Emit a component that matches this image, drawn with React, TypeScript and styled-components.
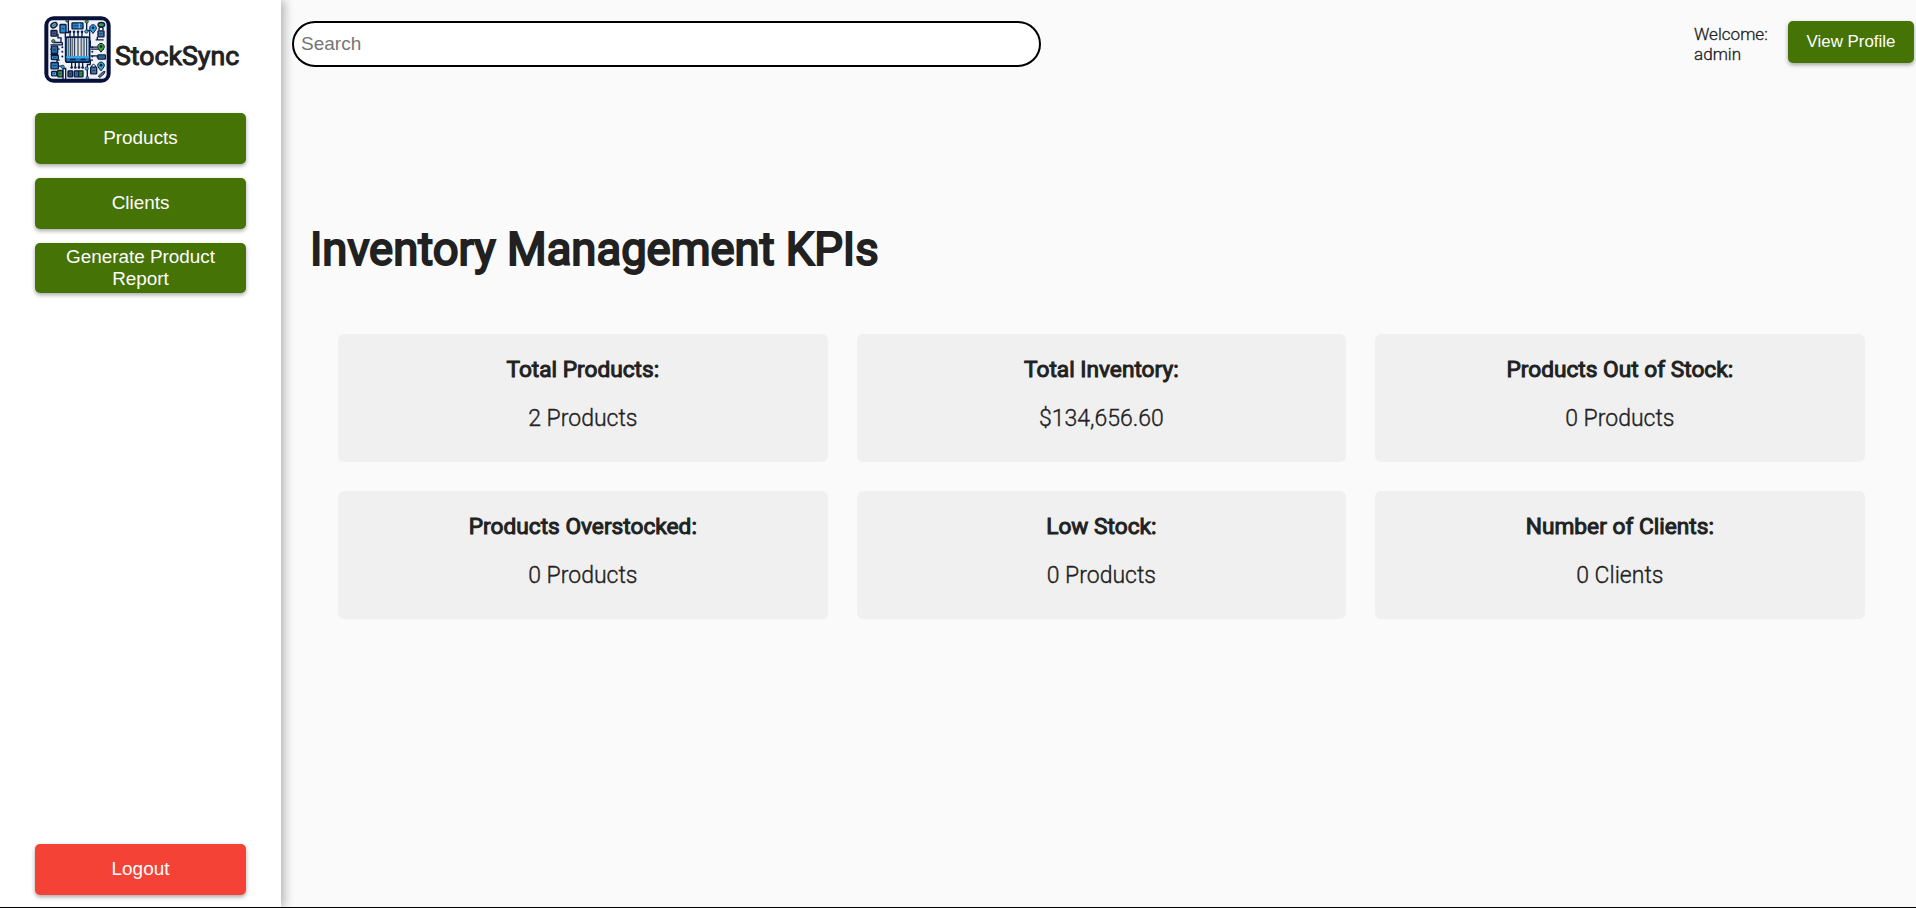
import React from "react";
import styled, { createGlobalStyle } from "styled-components";

const GlobalStyle = createGlobalStyle`
  *, *::before, *::after { box-sizing: border-box; }
  body {
    margin: 0;
    background: #fafafa;
    color: #212121;
    font-family: Roboto, "Liberation Sans", sans-serif;
    font-weight: 300;
  }
`;

const Page = styled.div`
  display: flex;
  height: 908px;
  overflow: hidden;
  border-bottom: 1px solid #000;
`;

const Sidebar = styled.aside`
  display: flex;
  flex-direction: column;
  align-items: center;
  flex: 0 0 281px;
  padding: 16px 0 12px;
  background: #fff;
  box-shadow: 3px 0 10px rgba(0, 0, 0, 0.3);
  z-index: 1;
`;

const Brand = styled.div`
  display: flex;
  align-items: flex-start;
  gap: 4px;
  height: 67px;
  margin: 0 0 30px 2px;
`;

const BrandName = styled.span`
  margin-top: 25px;
  font-size: 26.7px;
  line-height: 30px;
  font-weight: 400;
  -webkit-text-stroke: 1px #212121;
`;

const Button = styled.button`
  border: 0;
  border-radius: 5px;
  background: #457305;
  color: #fff;
  font-family: "Liberation Sans", Arial, sans-serif;
  box-shadow: 0 2px 4px rgba(0, 0, 0, 0.35);
`;

const NavButton = styled(Button)<{ $danger?: boolean; $short?: boolean }>`
  width: 211px;
  height: ${(p) => (p.$short ? 50 : 51)}px;
  padding: 0 20px ${(p) => (p.$short ? 1 : 2)}px;
  font-size: 18.9px;
  line-height: 22px;
  background: ${(p) => (p.$danger ? "#f44336" : "#457305")};
`;

const NavList = styled.nav`
  display: flex;
  flex: 1;
  flex-direction: column;
  gap: 14px;
`;

const Main = styled.main`
  flex: 1;
  min-width: 0;
`;

const Header = styled.header`
  display: flex;
  align-items: flex-start;
  padding: 21px 2px 0 11px;
`;

const SearchInput = styled.input`
  width: 749px;
  height: 46px;
  padding: 0 7px;
  border: 2px solid #000;
  border-radius: 23px;
  background: #fff;
  font-family: "Liberation Sans", Arial, sans-serif;
  font-size: 19px;
  &::placeholder { color: #757575; }
`;

const Welcome = styled.div`
  width: 76px;
  margin: 3px 18px 0 auto;
  font-size: 17.1px;
  line-height: 20px;
  -webkit-text-stroke: 0.3px #212121;
`;

const ProfileButton = styled(Button)`
  width: 126px;
  height: 42px;
  padding: 0 0 1px;
  font-size: 16.9px;
`;

const Title = styled.h1`
  margin: 153px 0 0 29px;
  font-size: 45.4px;
  line-height: 60px;
  font-weight: 400;
  -webkit-text-stroke: 2.1px #212121;
`;

const Grid = styled.section`
  display: grid;
  grid-template-columns: repeat(3, 1fr);
  gap: 28.6px 28.8px;
  margin: 54px 51.3px 0 57px;
`;

const Card = styled.article`
  height: 128.4px;
  padding-top: 21px;
  border-radius: 6px;
  background: #f0f0f0;
  text-align: center;
`;

const CardLabel = styled.h2`
  margin: 0 0 19.4px;
  font-size: 22.7px;
  line-height: 30px;
  font-weight: 400;
  -webkit-text-stroke: 1px #212121;
`;

const CardValue = styled.p`
  margin: 0;
  font-size: 23px;
  line-height: 30px;
  -webkit-text-stroke: 0.35px #212121;
`;

const kpis = [
  { label: "Total Products:", value: "2 Products" },
  { label: "Total Inventory:", value: "$134,656.60" },
  { label: "Products Out of Stock:", value: "0 Products" },
  { label: "Products Overstocked:", value: "0 Products" },
  { label: "Low Stock:", value: "0 Products" },
  { label: "Number of Clients:", value: "0 Clients" },
];

const Pin = ({ x, y, fill }: { x: number; y: number; fill: string }) => (
  <g>
    <path d={`M${x} ${y + 15}L${x - 9} ${y + 3}A10 10 0 1 1 ${x + 9} ${y + 3}Z`} fill={fill} stroke="#0b1b45" strokeWidth="3" />
    <circle cx={x} cy={y - 2} r="4" fill="#0b1b45" />
  </g>
);

const Tile = ({ x, y, w, h, fill }: { x: number; y: number; w: number; h: number; fill: string }) => (
  <g>
    <rect x={x} y={y} width={w} height={h} rx="2" fill={fill} stroke="#0b1b45" strokeWidth="4" />
    <path d={`M${x + 5} ${y + h / 2}h${w - 10}`} stroke="#0b1b45" strokeWidth="2" />
  </g>
);

const Logo = () => (
  <svg width="67" height="67" viewBox="41.5 32.5 200 201">
    <rect x="42" y="33" width="199" height="200" rx="28" fill="#07113a" />
    <rect x="54" y="45" width="175" height="176" rx="14" fill="#f0f2f8" />
    <g fill="none" stroke="#0b1b45" strokeWidth="4">
      <path d="M114 44v38h-9v18M83 86v12h9v14H69M60 119h36v-8M60 132h28M60 148h24M88 165h-8v18h18v39M106 222v-32H97M169 48v28h9v22h-9v20M180 106v20h22M196 104h24M181 132h40M181 152h20v6M180 178h-9v42M188 165h-8v14M201 95v10" />
      <path d="M119 79v20M131 79v20M143 79v20M155 79v20M124 167v19M135 167v19M146 167v19M157 167v19" />
    </g>
    <g fill="#0b1b45">
      {[119, 131, 143, 155].map((x) => <circle key={x} cx={x} cy="80" r="4" />)}
      {[124, 135, 146, 157].map((x) => <circle key={x} cx={x} cy="187" r="4" />)}
      {[126, 140, 154].map((y) => <circle key={y} cx="96" cy={y} r="3" />)}
      {[126, 140, 154].map((y) => <circle key={y} cx="186" cy={y} r="3" />)}
    </g>
    <rect x="106" y="96" width="72" height="75" rx="6" fill="#1f70b0" stroke="#0b1b45" strokeWidth="5" />
    <rect x="110" y="99" width="64" height="54" fill="#dce6ed" />
    <path d="M114 99v54M126 99v54M153 99v54" stroke="#65717e" strokeWidth="5" />
    <path d="M120 99v54M133 99v54M143 99v54M161 99v54M169 99v54" stroke="#17243d" strokeWidth="3" />
    <path d="M108 156h68" stroke="#35afe8" strokeWidth="6" />
    <path d="M119 163h17M151 163h15" stroke="#0b1b45" strokeWidth="4" />
    <ellipse cx="71" cy="60" rx="10" ry="7" fill="#82b9a4" stroke="#0b1b45" strokeWidth="4" transform="rotate(-32 71 60)" />
    <path d="M64 65l15-11" stroke="#0b1b45" strokeWidth="2" />
    <Tile x={89} y={58} w={18} h={25} fill="#2789c9" />
    <Tile x={62} y={76} w={18} h={17} fill="#425a74" />
    <Tile x={125} y={53} w={33} h={18} fill="#2584c1" />
    <path d="M147 55v14" stroke="#56c7e8" strokeWidth="4" />
    <Pin x={188} y={70} fill="#31a6dc" />
    <ellipse cx="213" cy="59" rx="10" ry="7" fill="#379c36" stroke="#0b1b45" strokeWidth="4" />
    <path d="M206 75v-6q7-8 12 0v6" fill="none" stroke="#0b1b45" strokeWidth="4" />
    <Tile x={203} y={77} w={18} h={18} fill="#427ca5" />
    <Tile x={63} y={123} w={19} h={22} fill="#286b9a" />
    <Tile x={63} y={151} w={21} h={12} fill="#38a4d5" />
    <Tile x={62} y={172} w={22} h={19} fill="#287eb5" />
    <Pin x={212} y={126} fill="#43a52e" />
    <Tile x={203} y={149} w={22} h={13} fill="#3985ad" />
    <Pin x={212} y={182} fill="#38a4b3" />
    <Tile x={181} y={186} w={18} h={20} fill="#46739e" />
    <path d="M184 186v-5q6-7 11 0v5" fill="none" stroke="#0b1b45" strokeWidth="3" />
    <path d="M204 213l14-13 6-1-3 7-13 11Z" fill="#4b8590" stroke="#0b1b45" strokeWidth="3" />
    <Tile x={64} y={199} w={15} h={13} fill="#4aa8d4" />
    <Tile x={82} y={196} w={15} h={19} fill="#359832" />
    <Tile x={113} y={197} w={14} h={18} fill="#2b5577" />
    <Tile x={132} y={197} w={13} h={18} fill="#367092" />
    <Tile x={145} y={197} w={13} h={18} fill="#329434" />
    <g stroke="#0b1b45" strokeWidth="2">
      <circle cx="69" cy="108" r="5" fill="#43a42b" />
      <circle cx="110" cy="47" r="4" fill="#43a42b" />
      <circle cx="169" cy="49" r="5" fill="#43a42b" />
      <circle cx="168" cy="79" r="5" fill="#30a7df" />
      <circle cx="97" cy="185" r="5" fill="#30a7df" />
      <circle cx="169" cy="190" r="5" fill="#30a7df" />
      <circle cx="171" cy="218" r="4" fill="#30a7df" />
    </g>
  </svg>
);

export default function App() {
  return (
    <>
      <GlobalStyle />
      <Page>
        <Sidebar>
          <Brand>
            <Logo />
            <BrandName>StockSync</BrandName>
          </Brand>
          <NavList>
            <NavButton>Products</NavButton>
            <NavButton>Clients</NavButton>
            <NavButton $short>Generate Product Report</NavButton>
          </NavList>
          <NavButton $danger>Logout</NavButton>
        </Sidebar>
        <Main>
          <Header>
            <SearchInput placeholder="Search" />
            <Welcome>Welcome: admin</Welcome>
            <ProfileButton>View Profile</ProfileButton>
          </Header>
          <Title>Inventory Management KPIs</Title>
          <Grid>
            {kpis.map((kpi) => (
              <Card key={kpi.label}>
                <CardLabel>{kpi.label}</CardLabel>
                <CardValue>{kpi.value}</CardValue>
              </Card>
            ))}
          </Grid>
        </Main>
      </Page>
    </>
  );
}
